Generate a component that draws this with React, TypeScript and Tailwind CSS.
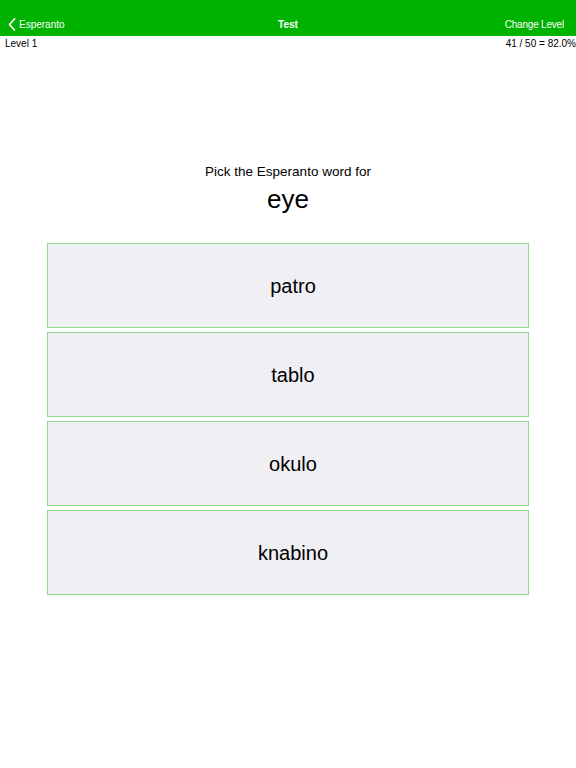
import React from "react";

export default function App() {
  const words = ["patro", "tablo", "okulo", "knabino"];
  return (
    <div
      className="w-[576px] h-[768px] bg-white text-black"
      style={{ fontFamily: '"Liberation Sans", Arial, sans-serif' }}
    >
      <div className="h-[36px] bg-[#00b300] flex items-center justify-between text-white text-[10px] relative">
        <div className="flex items-center pl-[8px] pt-[12px]">
          <svg width="8" height="13" viewBox="0 0 8 13" className="mr-[3px]">
            <path d="M6.5 1 L1.5 6.5 L6.5 12" fill="none" stroke="white" strokeWidth="1.8" strokeLinecap="round" strokeLinejoin="round" />
          </svg>
          <span>Esperanto</span>
        </div>
        <div className="absolute left-0 right-0 top-0 h-[36px] flex items-center justify-center pt-[12px] pointer-events-none">
          <span className="font-semibold">Test</span>
        </div>
        <div className="pr-[12px] pt-[12px] tracking-[-0.2px]">Change Level</div>
      </div>
      <div className="flex justify-between text-[10px] leading-[13px] px-[5px] pt-[1px]">
        <span>Level 1</span>
        <span className="-mr-[5px]">41 / 50 = 82.0%</span>
      </div>
      <div className="mt-[113px] flex flex-col items-center">
        <div className="text-[13.5px] leading-[17px]">Pick the Esperanto word for</div>
        <div className="text-[26px] leading-[30px] mt-[4px]">eye</div>
      </div>
      <div className="mt-[29px] mx-[47px] flex flex-col gap-[4px]">
        {words.map((w) => (
          <div
            key={w}
            className="h-[85px] border border-[#8fdc8f] bg-[#efeff4] flex items-center justify-center pl-[10px] text-[20px]"
          >
            {w}
          </div>
        ))}
      </div>
    </div>
  );
}
